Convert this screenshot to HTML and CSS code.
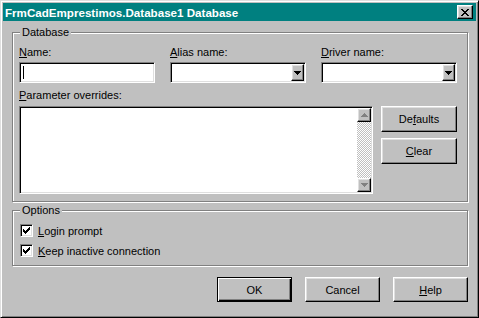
FILE: index.html
```html
<!DOCTYPE html>
<html lang="en">
<head>
    <meta charset="UTF-8">
    <title>FrmCadEmprestimos.Database1 Database</title>
    <link rel="stylesheet" href="styles.css">
</head>
<body>
    <div class="window">
        <div class="titlebar">
            <span class="title">FrmCadEmprestimos.Database1 Database</span>
            <button class="close-btn raised" title="Close">
                <svg width="8" height="7" viewBox="0 0 8 7" shape-rendering="crispEdges"><path d="M0 0h2v1H0zM6 0h2v1H6zM1 1h2v1H1zM5 1h2v1H5zM2 2h4v1H2zM3 3h2v1H3zM2 4h4v1H2zM1 5h2v1H1zM5 5h2v1H5zM0 6h2v1H0zM6 6h2v1H6z" fill="#000"/></svg>
            </button>
        </div>

        <div class="client">
            <fieldset class="group group-db">
                <legend>Database</legend>
                <div class="fields">
                    <div class="field">
                        <label><u>N</u>ame:</label>
                        <div class="edit"><span class="caret"></span></div>
                    </div>
                    <div class="field">
                        <label><u>A</u>lias name:</label>
                        <div class="edit combo">
                            <span class="drop raised">
                                <svg width="7" height="4" viewBox="0 0 7 4" shape-rendering="crispEdges"><path d="M0 0h7v1H0zM1 1h5v1H1zM2 2h3v1H2zM3 3h1v1H3z" fill="#000"/></svg>
                            </span>
                        </div>
                    </div>
                    <div class="field">
                        <label><u>D</u>river name:</label>
                        <div class="edit combo">
                            <span class="drop raised">
                                <svg width="7" height="4" viewBox="0 0 7 4" shape-rendering="crispEdges"><path d="M0 0h7v1H0zM1 1h5v1H1zM2 2h3v1H2zM3 3h1v1H3z" fill="#000"/></svg>
                            </span>
                        </div>
                    </div>
                </div>

                <label class="params-label"><u>P</u>arameter overrides:</label>
                <div class="params-row">
                    <div class="memo">
                        <div class="memo-text"></div>
                        <div class="vscroll">
                            <span class="scroll-btn raised">
                                <svg width="7" height="4" viewBox="0 0 7 4" shape-rendering="crispEdges"><path d="M3 0h1v1H3zM2 1h3v1H2zM1 2h5v1H1zM0 3h7v1H0z" fill="#808080"/></svg>
                            </span>
                            <span class="scroll-track"></span>
                            <span class="scroll-btn raised">
                                <svg width="7" height="4" viewBox="0 0 7 4" shape-rendering="crispEdges"><path d="M0 0h7v1H0zM1 1h5v1H1zM2 2h3v1H2zM3 3h1v1H3z" fill="#808080"/></svg>
                            </span>
                        </div>
                    </div>
                    <div class="side-buttons">
                        <button class="btn raised">De<u>f</u>aults</button>
                        <button class="btn raised"><u>C</u>lear</button>
                    </div>
                </div>
            </fieldset>

            <fieldset class="group group-opt">
                <legend>Options</legend>
                <div class="check-row">
                    <span class="checkbox">
                        <svg width="7" height="7" viewBox="0 0 7 7" shape-rendering="crispEdges"><path d="M6 0h1v1H6zM5 1h2v1H5zM0 2h1v1H0zM4 2h3v1H4zM0 3h2v1H0zM3 3h3v1H3zM0 4h5v1H0zM1 5h3v1H1zM2 6h1v1H2z" fill="#000"/></svg>
                    </span>
                    <span><u>L</u>ogin prompt</span>
                </div>
                <div class="check-row">
                    <span class="checkbox">
                        <svg width="7" height="7" viewBox="0 0 7 7" shape-rendering="crispEdges"><path d="M6 0h1v1H6zM5 1h2v1H5zM0 2h1v1H0zM4 2h3v1H4zM0 3h2v1H0zM3 3h3v1H3zM0 4h5v1H0zM1 5h3v1H1zM2 6h1v1H2z" fill="#000"/></svg>
                    </span>
                    <span><u>K</u>eep inactive connection</span>
                </div>
            </fieldset>

            <div class="actions">
                <button class="btn btn-default">OK</button>
                <button class="btn raised">Cancel</button>
                <button class="btn raised"><u>H</u>elp</button>
            </div>
        </div>
    </div>
</body>
</html>
```

FILE: styles.css
```css
* {
    margin: 0;
    padding: 0;
    box-sizing: border-box;
}

body {
    font-family: 'Liberation Sans', Arial, sans-serif;
    font-size: 11px;
    color: #000;
    background: #c0c0c0;
}

u {
    text-underline-offset: 1px;
}

.window {
    width: 479px;
    height: 318px;
    background: #c0c0c0;
    border: 1px solid;
    border-color: #dfdfdf #000 #000 #dfdfdf;
    box-shadow: inset 1px 1px #fff, inset -1px -1px #808080;
    padding: 2px;
    display: flex;
    flex-direction: column;
}

.titlebar {
    height: 18px;
    background: #008080;
    color: #fff;
    display: flex;
    align-items: center;
    justify-content: space-between;
    padding: 0 3px 0 2px;
}

.title {
    font-weight: bold;
    font-size: 11.6px;
    white-space: nowrap;
}

.raised {
    background: #c0c0c0;
    border: 1px solid;
    border-color: #fff #000 #000 #fff;
    box-shadow: inset -1px -1px #808080, inset 1px 1px #dfdfdf;
}

.close-btn {
    width: 16px;
    height: 14px;
    display: flex;
    align-items: center;
    justify-content: center;
}

.client {
    flex: 1;
    padding: 5px 8px 0 9px;
    display: flex;
    flex-direction: column;
}

.group {
    border: 1px solid #808080;
    box-shadow: 1px 1px 0 #fff, inset 1px 1px 0 #fff;
    padding: 7px 10px 7px 6px;
    min-width: 0;
}

.group legend {
    padding: 0 2px;
    margin-left: 1px;
    line-height: 13px;
    background: #c0c0c0;
}

.fields {
    display: grid;
    grid-template-columns: repeat(3, 136px);
    column-gap: 15px;
}

.field label {
    display: block;
    line-height: 13px;
    margin-bottom: 3px;
}

.edit {
    height: 21px;
    background: #fff;
    border: 1px solid;
    border-color: #808080 #fff #fff #808080;
    box-shadow: inset 1px 1px #000, inset -1px -1px #dfdfdf;
    padding: 1px;
    display: flex;
    align-items: center;
}

.caret {
    width: 1px;
    height: 13px;
    margin-left: 2px;
    background: #000;
}

.combo {
    justify-content: flex-end;
}

.drop {
    width: 13px;
    height: 17px;
    display: flex;
    align-items: center;
    justify-content: center;
}

.params-label {
    display: block;
    line-height: 13px;
    margin: 6px 0 4px;
}

.params-row {
    display: flex;
    gap: 8px;
    align-items: flex-start;
}

.memo {
    width: 354px;
    height: 88px;
    background: #fff;
    border: 1px solid;
    border-color: #808080 #fff #fff #808080;
    box-shadow: inset 1px 1px #000, inset -1px -1px #dfdfdf;
    padding: 1px;
    display: flex;
}

.memo-text {
    flex: 1;
}

.vscroll {
    width: 14px;
    display: flex;
    flex-direction: column;
}

.scroll-btn {
    height: 14px;
    display: flex;
    align-items: center;
    justify-content: center;
}

.scroll-track {
    flex: 1;
    background: repeating-conic-gradient(#fff 0 25%, #c0c0c0 0 50%) 0 0 / 2px 2px;
}

.side-buttons {
    display: flex;
    flex-direction: column;
    gap: 6px;
}

.btn {
    width: 76px;
    height: 26px;
    font-family: inherit;
    font-size: 11px;
    color: #000;
    text-align: center;
}

.group-opt {
    margin-top: 2px;
    padding: 5px 10px 6px 6px;
}

.check-row {
    height: 17px;
    display: flex;
    align-items: center;
    gap: 5px;
}

.check-row + .check-row {
    margin-top: 3px;
}

.checkbox {
    width: 13px;
    height: 13px;
    margin-left: 1px;
    background: #fff;
    border: 1px solid;
    border-color: #808080 #fff #fff #808080;
    box-shadow: inset 1px 1px #000, inset -1px -1px #dfdfdf;
    display: flex;
    align-items: center;
    justify-content: center;
}

.actions {
    margin-top: 11px;
    display: flex;
    justify-content: flex-end;
    gap: 13px;
}

.actions .btn {
    width: 75px;
    height: 25px;
}

.btn-default {
    background: #c0c0c0;
    border: 1px solid #000;
    box-shadow: inset 1px 1px #fff, inset -1px -1px #000, inset -2px -2px #808080;
}
```
